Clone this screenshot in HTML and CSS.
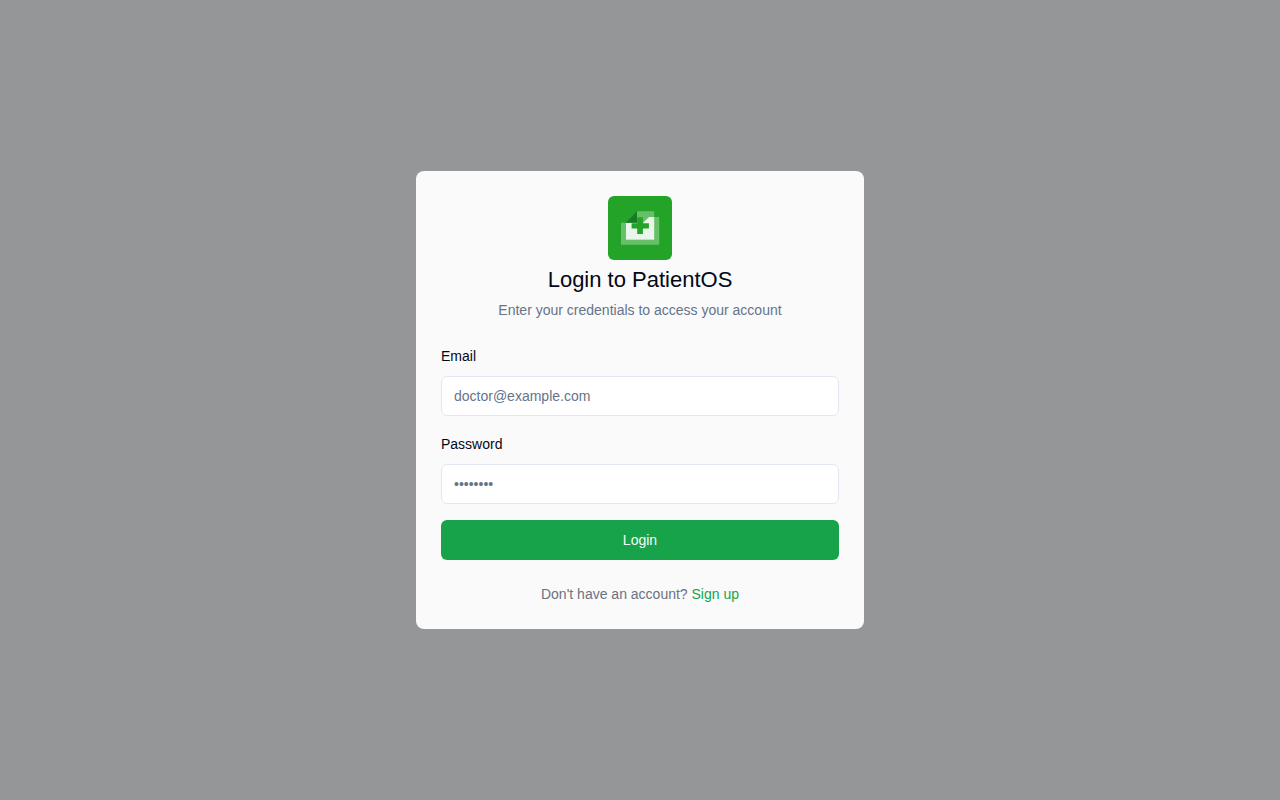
FILE: index.html
```html
<!DOCTYPE html>
<html lang="en">
<head>
<meta charset="utf-8">
<meta name="viewport" content="width=device-width, initial-scale=1">
<title>Login to PatientOS</title>
<link rel="stylesheet" href="styles.css">
</head>
<body>
<main class="page">
  <section class="card">
    <header class="card-header">
      <svg class="logo" viewBox="0 0 64 64" aria-hidden="true">
        <rect width="64" height="64" rx="6" fill="#23a428"/>
        <path d="M13 26.800h5v17h28V21h5.200v27.700H13z" fill="#66bf69"/>
        <path d="M29 15.300h17.200v5.900h-5l-6 6h-6.200z" fill="#66bf69"/>
        <path d="M18 26.800h17.200l5.800-5.800h5.200v22.800H18z" fill="#eaf6ea"/>
        <path d="M29 15.300v11.500H17.800z" fill="#1a7a26"/>
        <path d="M29.200 21.200h5.700v6h6v5.400h-6v5.500h-5.700v-5.500h-5.600v-5.400h5.600z" fill="#23a428"/>
      </svg>
      <h1 class="title">Login to PatientOS</h1>
      <p class="subtitle">Enter your credentials to access your account</p>
    </header>
    <form class="form">
      <div class="field">
        <label class="label" for="email">Email</label>
        <input class="input" id="email" type="email" placeholder="doctor@example.com">
      </div>
      <div class="field">
        <label class="label" for="password">Password</label>
        <input class="input" id="password" type="password" placeholder="••••••••">
      </div>
      <button class="button" type="submit">Login</button>
    </form>
    <p class="footer">Don't have an account? <a class="link" href="#">Sign up</a></p>
  </section>
</main>
</body>
</html>
```
FILE: styles.css
```css
* {
  box-sizing: border-box;
}

body {
  margin: 0;
  background: #959697;
  color: #020817;
  font-family: "Liberation Sans", Arial, sans-serif;
  font-size: 14px;
  line-height: 20px;
}

.page {
  display: flex;
  align-items: center;
  justify-content: center;
  min-height: 100vh;
  padding: 16px;
}

.card {
  width: 100%;
  max-width: 448px;
  padding: 25px;
  border-radius: 8px;
  background: #fafafa;
}

.card-header {
  display: flex;
  flex-direction: column;
  align-items: center;
  gap: 4px;
  text-align: center;
}

.logo {
  display: block;
  width: 64px;
  height: 64px;
}

.title {
  margin: 0;
  font-size: 22px;
  font-weight: 400;
  line-height: 32px;
}

.subtitle {
  margin: 0;
  color: #64748b;
}

.form {
  display: flex;
  flex-direction: column;
  gap: 16px;
  margin-top: 24px;
}

.field {
  display: flex;
  flex-direction: column;
  gap: 8px;
}

.label {
  line-height: 24px;
}

.input {
  width: 100%;
  height: 40px;
  padding: 8px 12px;
  border: 1px solid #e2e8f0;
  border-radius: 6px;
  background: #fff;
  color: inherit;
  font: inherit;
}

.input::placeholder {
  color: #64748b;
  opacity: 1;
}

.button {
  height: 40px;
  border: 0;
  border-radius: 6px;
  background: #16a34a;
  color: #f8fafc;
  font: inherit;
  cursor: pointer;
}

.footer {
  margin: 24px 0 0;
  color: #6b7280;
  text-align: center;
}

.link {
  color: #16a34a;
  text-decoration: none;
}
```
